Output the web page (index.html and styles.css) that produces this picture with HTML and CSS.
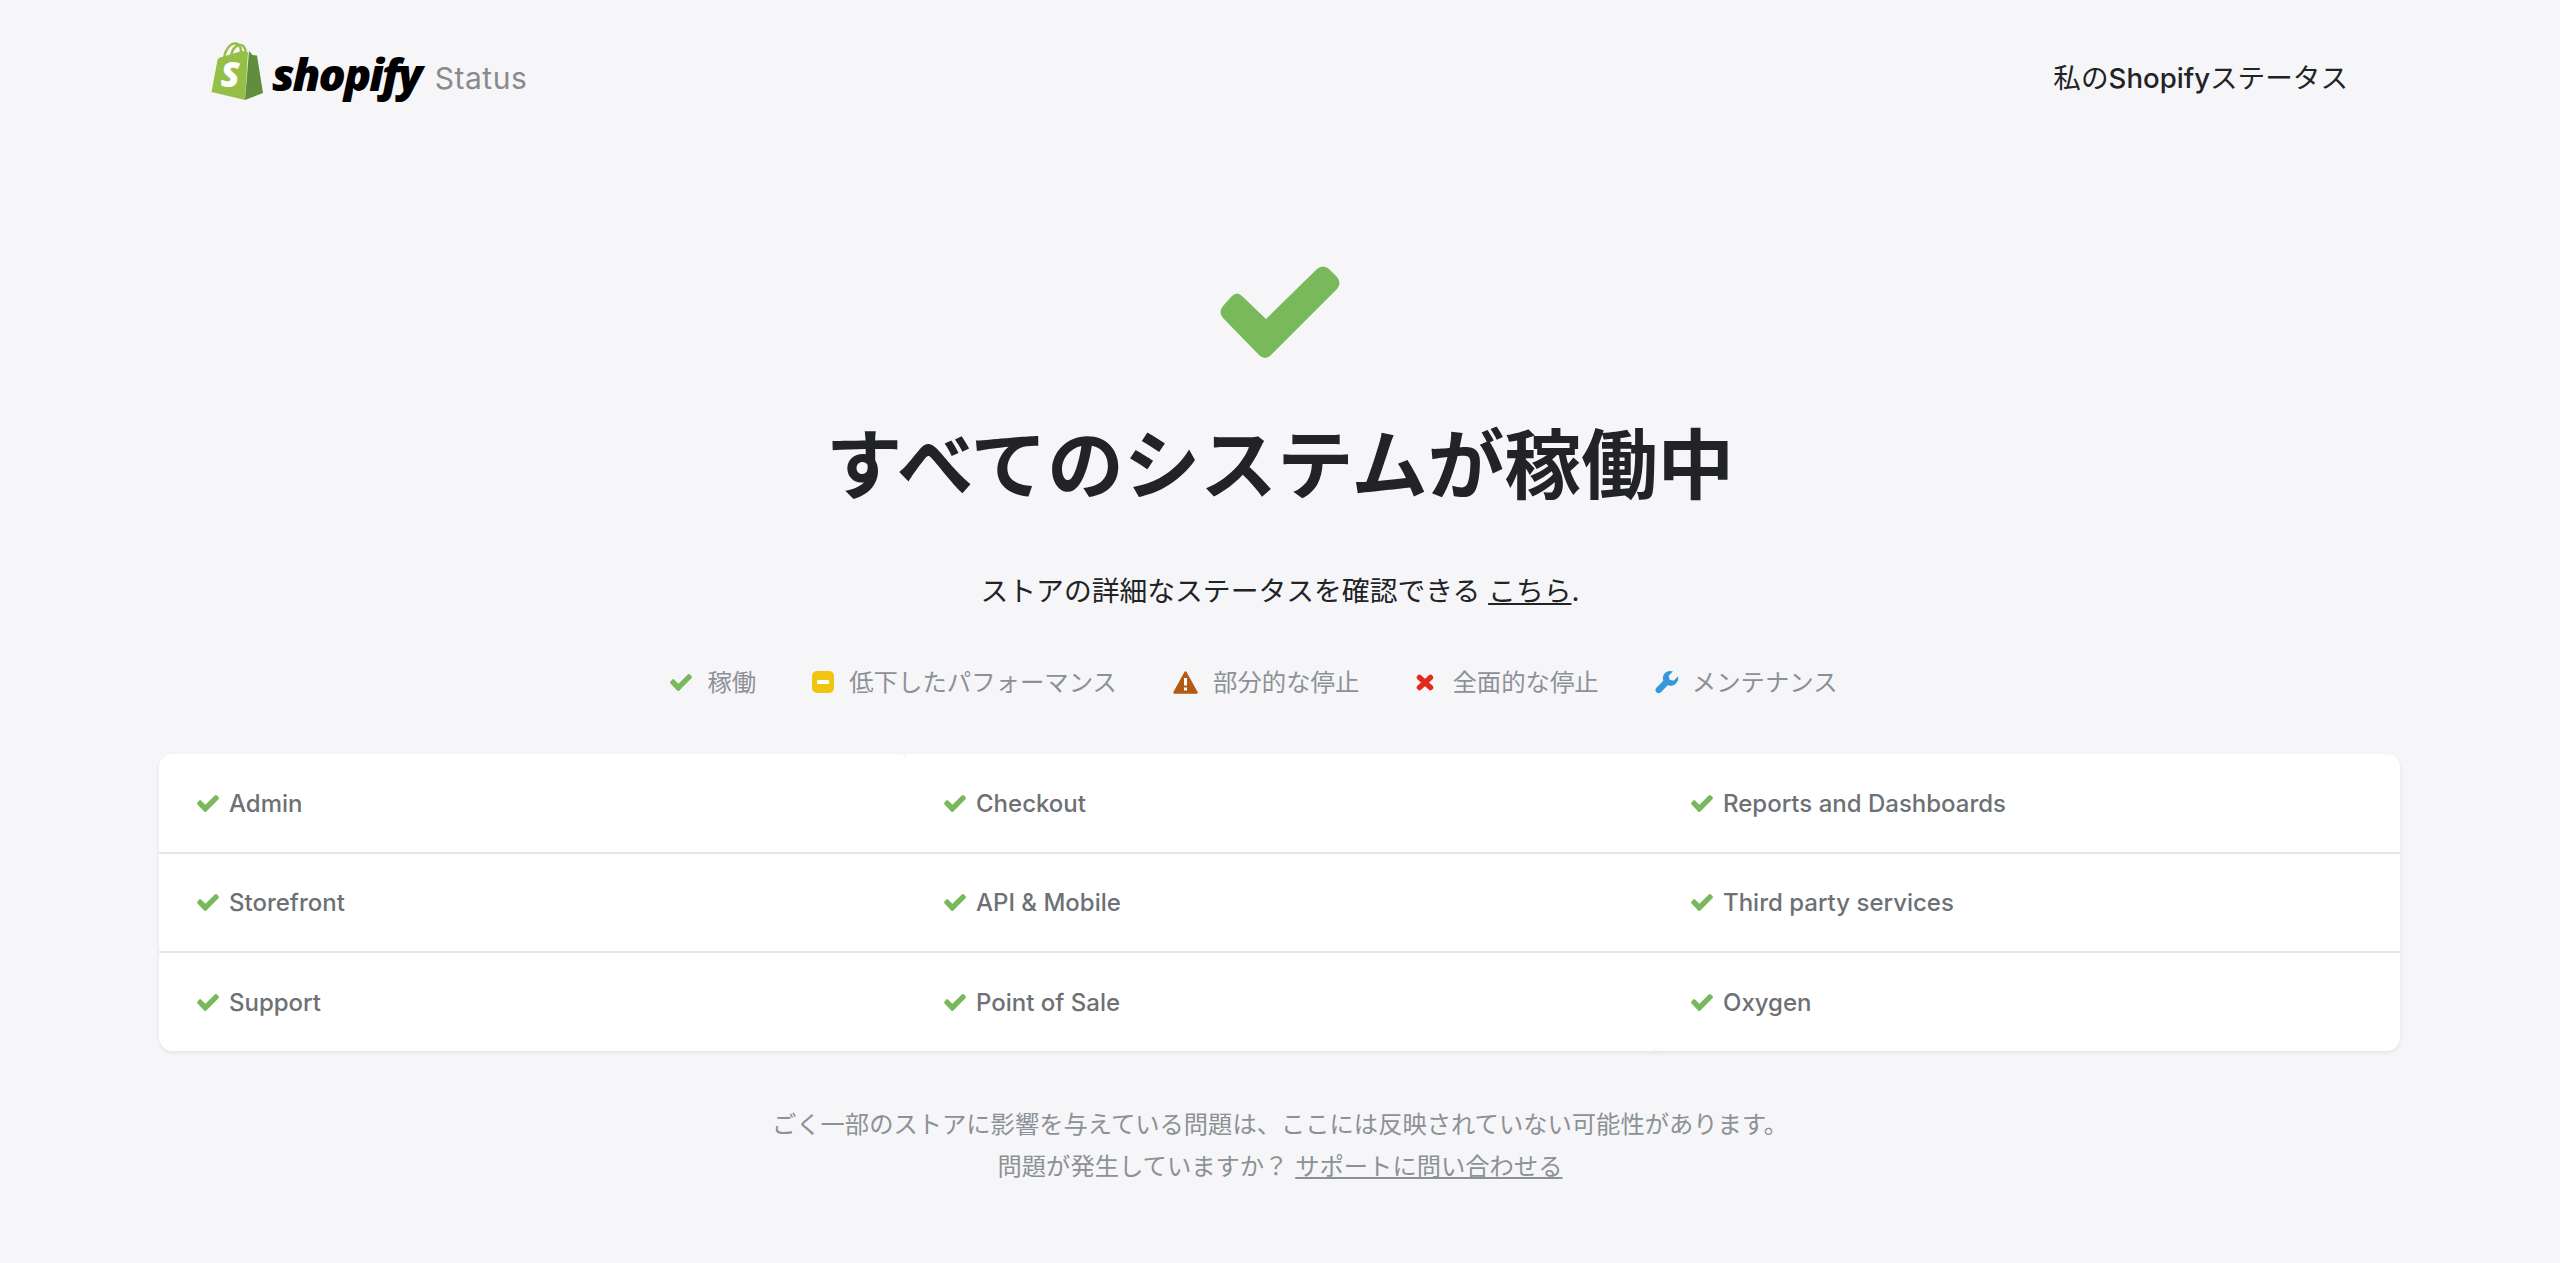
FILE: index.html
```html
<!DOCTYPE html>
<html lang="ja">
<head>
    <meta charset="UTF-8">
    <title>Shopify Status</title>
    <link rel="stylesheet" href="styles.css">
</head>
<body>
    <svg class="icon-defs" width="0" height="0">
        <symbol id="check" viewBox="0 0 120 92" preserveAspectRatio="none">
            <path d="M3 40 L12 30 Q17 25 22 30 L46 53 L97 3 Q103 -2 109 3 L117 11 Q122 17 117 23 L51 89 Q45 95 39 89 L3 52 Q-2 46 3 40 Z"/>
        </symbol>
    </svg>

    <header class="header">
        <a class="logo" href="#">
            <svg class="logo-bag" viewBox="0 0 52 58">
                <path fill="#95bf47" d="M0.500 50 L6.500 18 Q7 16 9 15.500 L31 9 L37 10 L34 58 Z"/>
                <path fill="#5e8e3e" d="M34 58 L38 9 L41.500 13 L46 13.500 L52 51 Z"/>
                <path fill="none" stroke="#95bf47" stroke-width="2.400" d="M13 16 C14 8 19 1.500 24 1.500 C28 1.500 30 5 30 10"/>
                <path fill="none" stroke="#95bf47" stroke-width="2.400" d="M20 14 C21 8 24 4 28 3 C32 2 34.500 6 34.500 10"/>
                <text class="logo-s" x="9.500" y="45">S</text>
            </svg>
            <span class="logo-word">shopify</span>
            <span class="logo-status">Status</span>
        </a>
        <a class="my-status" href="#">私の<span class="my-status-name">Shopify</span>ステータス</a>
    </header>

    <main>
        <section class="hero">
            <svg class="hero-check"><use href="#check"/></svg>
            <h1>すべてのシステムが稼働中</h1>
            <p class="hero-sub">ストアの詳細なステータスを確認できる <a href="#">こちら</a>.</p>
        </section>

        <ul class="legend">
            <li>
                <svg class="legend-check"><use href="#check"/></svg>
                稼働
            </li>
            <li>
                <svg class="legend-box" viewBox="0 0 22 22">
                    <rect x="0" y="0" width="22" height="22" rx="5" fill="#f1c40f"/>
                    <rect x="5" y="9" width="12" height="4" rx="1" fill="#fff"/>
                </svg>
                低下したパフォーマンス
            </li>
            <li>
                <svg class="legend-warn" viewBox="0 0 25 23">
                    <path fill="#b35a14" stroke="#b35a14" stroke-width="2.500" stroke-linejoin="round" d="M12.500 1.500 L23.500 21.500 L1.500 21.500 Z"/>
                    <rect x="11" y="7" width="3" height="7.500" fill="#fff"/>
                    <rect x="11" y="16.500" width="3" height="3" fill="#fff"/>
                </svg>
                部分的な停止
            </li>
            <li>
                <svg class="legend-cross" viewBox="0 0 20 17">
                    <path fill="none" stroke="#e32b1c" stroke-width="5.500" stroke-linecap="round" d="M4.500 3.500 L15.500 13.500 M15.500 3.500 L4.500 13.500"/>
                </svg>
                全面的な停止
            </li>
            <li>
                <svg class="legend-wrench" viewBox="0 0 20 20">
                    <path fill="#3498db" d="M19.500 4.800 15.800 8.500 12.300 7.700 11.500 4.200 15.200.5C12.800-.4 10-.0 8.200 1.900 6.400 3.700 6 6.300 6.800 8.500L.8 14.500C-.3 15.600-.3 17.300.8 18.400 1.900 19.500 3.600 19.500 4.700 18.400L10.700 12.400C13.100 13.200 15.700 12.800 17.500 11 19.400 9.200 20.300 7 19.500 4.800Z"/>
                </svg>
                メンテナンス
            </li>
        </ul>

        <div class="components">
            <div class="component"><svg><use href="#check"/></svg>Admin</div>
            <div class="component"><svg><use href="#check"/></svg>Checkout</div>
            <div class="component"><svg><use href="#check"/></svg>Reports and Dashboards</div>
            <div class="component"><svg><use href="#check"/></svg>Storefront</div>
            <div class="component"><svg><use href="#check"/></svg>API &amp; Mobile</div>
            <div class="component"><svg><use href="#check"/></svg>Third party services</div>
            <div class="component"><svg><use href="#check"/></svg>Support</div>
            <div class="component"><svg><use href="#check"/></svg>Point of Sale</div>
            <div class="component"><svg><use href="#check"/></svg>Oxygen</div>
        </div>

        <footer class="note">
            <p>ごく一部のストアに影響を与えている問題は、ここには反映されていない可能性があります。</p>
            <p>問題が発生していますか？ <a href="#">サポートに問い合わせる</a></p>
        </footer>
    </main>
</body>
</html>
```

FILE: styles.css
```css
body {
    margin: 0;
    background-color: #f6f6f8;
    color: #212326;
    font-family: Inter, "Noto Sans CJK JP", sans-serif;
}

a {
    color: inherit;
}

.icon-defs {
    display: block;
}

/* Header */
.header {
    display: flex;
    justify-content: space-between;
    align-items: center;
    height: 152px;
    padding: 0 212px 0 211px;
}

.logo {
    display: flex;
    align-items: center;
    text-decoration: none;
}

.logo-bag {
    width: 52px;
    height: 58px;
    margin: 0 9px 10px 0;
}

.logo-s {
    font-family: "Open Sans", sans-serif;
    font-size: 35px;
    font-weight: 800;
    font-style: italic;
    fill: #fff;
}

.logo-word {
    margin-bottom: 5px;
    font-family: "Open Sans", sans-serif;
    font-size: 45px;
    font-weight: 800;
    font-style: italic;
    letter-spacing: -2px;
    color: #000;
}

.logo-status {
    margin: 4px 0 0 14px;
    font-size: 30px;
    letter-spacing: 0.5px;
    color: #8a8a8c;
}

.my-status {
    font-size: 27.6px;
    text-decoration: none;
}

.my-status-name {
    font-weight: 500;
}

/* Hero */
.hero {
    display: flex;
    flex-direction: column;
    align-items: center;
    padding-top: 114px;
}

.hero-check {
    width: 120px;
    height: 92px;
    fill: #79b85b;
}

.hero h1 {
    margin: 57px 0 0;
    font-size: 76.6px;
    line-height: 100px;
    font-weight: 700;
}

.hero-sub {
    margin: 56px 0 0;
    font-size: 27.8px;
    line-height: 40px;
}

/* Legend */
.legend {
    display: flex;
    justify-content: center;
    gap: 56px;
    margin: 51px 0 0;
    padding: 0 52px 0 0;
    list-style: none;
    font-size: 24.4px;
    line-height: 40px;
    color: #8c9196;
}

.legend li {
    display: flex;
    align-items: center;
    gap: 15px;
}

.legend-check {
    width: 22px;
    height: 17px;
    fill: #79b85b;
}

.legend-box {
    width: 22px;
    height: 22px;
}

.legend-warn {
    width: 25px;
    height: 23px;
}

.legend-cross {
    width: 20px;
    height: 17px;
    margin-right: 2px;
}

.legend-wrench {
    width: 24px;
    height: 23px;
    margin-right: -2px;
}

/* Components */
.components {
    display: grid;
    grid-template-columns: repeat(3, 1fr);
    grid-template-rows: 100px 99px 98px;
    margin: 52px 160px 0 159px;
    border-radius: 14px;
    box-shadow: 0 2px 4px rgba(0, 0, 0, 0.08);
}

.component {
    display: flex;
    align-items: center;
    gap: 10px;
    box-sizing: border-box;
    padding-left: 38px;
    background-color: #fff;
    border-bottom: 2px solid #e6e7e9;
    font-size: 24px;
    font-weight: 500;
    color: #6d7175;
}

.component:nth-last-child(-n+3) {
    border-bottom: none;
}

.component:nth-child(1) {
    border-radius: 14px 6px 0 0;
}

.component:nth-child(3) {
    border-top-right-radius: 14px;
}

.component:nth-child(7) {
    border-bottom-left-radius: 14px;
}

.component:nth-child(9) {
    border-radius: 0 0 14px 6px;
}

.component svg {
    width: 22px;
    height: 17px;
    fill: #79b85b;
}

/* Footer note */
.note {
    margin-top: 52px;
    text-align: center;
    font-size: 24.3px;
    line-height: 42px;
    color: #8c9196;
}

.note p {
    margin: 0;
}
```
